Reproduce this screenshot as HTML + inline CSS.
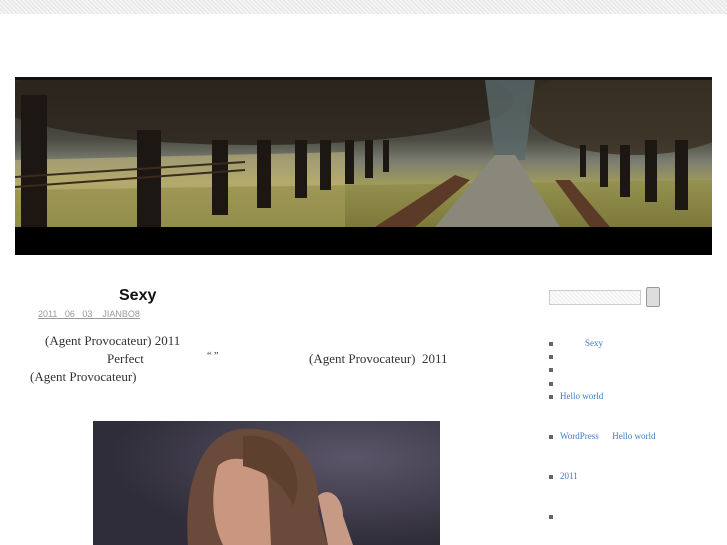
<!DOCTYPE html>
<html><head><meta charset="utf-8"><style>
body{margin:0;width:727px;height:545px;overflow:hidden;background:#fff;position:relative;font-family:"Liberation Serif","Noto Serif CJK SC",serif}
.a{position:absolute}
.top{left:0;top:0;width:727px;height:14px;background:repeating-linear-gradient(45deg,#e4e4e4 0 1px,#f4f4f4 1px 3px)}
.li{position:absolute;left:550px;font-size:9px;color:#3a7dc9}
.li:before{content:"";position:absolute;left:-1px;top:4px;width:4px;height:4px;background:#666}
.li span{margin-left:10px}
</style></head><body>
<div class="a top"></div>
<div class="a" style="left:15px;top:77px;width:697px;height:3px;background:#111"></div>
<svg class="a" style="left:15px;top:80px" width="697" height="147" viewBox="0 0 697 147">
<defs>
<linearGradient id="s" x1="0" y1="0" x2="0" y2="1"><stop offset="0" stop-color="#2e2a22"/><stop offset=".4" stop-color="#4a4a42"/><stop offset=".55" stop-color="#7a7d70"/><stop offset=".7" stop-color="#9e9a5c"/><stop offset="1" stop-color="#6e6c34"/></linearGradient>
</defs>
<rect width="697" height="147" fill="url(#s)"/>
<ellipse cx="240" cy="20" rx="260" ry="45" fill="#2b241c" opacity=".8"/>
<ellipse cx="620" cy="30" rx="110" ry="45" fill="#3a2f22" opacity=".8"/>
<polygon points="470,0 520,0 510,80 480,80" fill="#5a6a6a" opacity=".8"/>
<polygon points="0,80 330,72 330,147 0,147" fill="#c4b878" opacity=".55"/>
<polygon points="0,110 697,100 697,147 0,147" fill="#8a8540" opacity=".5"/>
<polygon points="480,75 500,75 545,147 420,147" fill="#8a877b"/>
<polygon points="360,147 440,95 455,100 400,147" fill="#5b3a28"/>
<polygon points="540,100 555,100 595,147 575,147" fill="#5b3a28"/>
<g fill="#1c1712">
<rect x="6" y="15" width="26" height="132"/><rect x="122" y="50" width="24" height="97"/><rect x="197" y="60" width="16" height="75"/>
<rect x="242" y="60" width="14" height="68"/><rect x="280" y="60" width="12" height="58"/><rect x="305" y="60" width="11" height="50"/>
<rect x="330" y="60" width="9" height="44"/><rect x="350" y="60" width="8" height="38"/><rect x="368" y="60" width="6" height="32"/>
<rect x="660" y="60" width="13" height="70"/><rect x="630" y="60" width="12" height="62"/><rect x="605" y="65" width="10" height="52"/>
<rect x="585" y="65" width="8" height="42"/><rect x="565" y="65" width="6" height="32"/>
</g>
<g stroke="#3a2a1c" stroke-width="2"><line x1="0" y1="97" x2="230" y2="82"/><line x1="0" y1="107" x2="230" y2="90"/></g>
</svg>
<div class="a" style="left:15px;top:227px;width:697px;height:28px;background:#000"></div>

<div class="a" style="left:119px;top:287px;font:bold 16px 'Liberation Sans',sans-serif;color:#111">Sexy</div>
<div class="a" style="left:38px;top:309px;font:9px 'Liberation Sans',sans-serif;color:#999;text-decoration:underline">2011&nbsp;&nbsp;&nbsp;06&nbsp;&nbsp;&nbsp;03&nbsp;&nbsp;&nbsp;&nbsp;JIANBO8</div>
<div class="a" style="left:45px;top:333px;font-size:13px;color:#333">(Agent Provocateur) 2011</div>
<div class="a" style="left:107px;top:351px;font-size:13px;color:#333">Perfect</div>
<div class="a" style="left:207px;top:351px;font-size:10px;color:#333">“ ”</div>
<div class="a" style="left:309px;top:351px;font-size:13px;color:#333">(Agent Provocateur)&nbsp; 2011</div>
<div class="a" style="left:30px;top:369px;font-size:13px;color:#333">(Agent Provocateur)</div>

<svg class="a" style="left:93px;top:421px" width="347" height="124" viewBox="0 0 347 124">
<defs><radialGradient id="b" cx=".75" cy=".3" r=".7"><stop offset="0" stop-color="#5a5568"/><stop offset="1" stop-color="#302d3a"/></radialGradient></defs>
<rect width="347" height="124" fill="url(#b)"/>
<path d="M95,124 C90,60 110,10 150,8 C200,5 230,40 225,90 L235,124 Z" fill="#6a4a3a"/>
<path d="M125,45 C140,30 170,40 175,60 L178,124 L130,124 C118,100 118,70 125,45Z" fill="#c99680"/>
<path d="M150,15 C190,10 215,50 200,85 C190,60 170,50 150,45 Z" fill="#5e402f"/>
<path d="M225,75 C235,65 250,75 250,95 L260,124 L235,124 Z" fill="#c79a86"/>
</svg>

<div class="a" style="left:549px;top:290px;width:92px;height:15px;border:1px solid #ccc;background:repeating-linear-gradient(45deg,#eee 0 1px,#fafafa 1px 3px);box-sizing:border-box"></div>
<div class="a" style="left:646px;top:287px;width:14px;height:20px;border:1px solid #999;border-radius:2px;background:#ddd;box-sizing:border-box"></div>

<div class="li" style="top:338px"><span style="margin-left:35px">Sexy</span></div>
<div class="li" style="top:351px"></div>
<div class="li" style="top:364px"></div>
<div class="li" style="top:378px"></div>
<div class="li" style="top:391px"><span>Hello world</span></div>
<div class="li" style="top:431px"><span>WordPress&nbsp;&nbsp;&nbsp;&nbsp;&nbsp;&nbsp;Hello world</span></div>
<div class="li" style="top:471px"><span>2011</span></div>
<div class="li" style="top:511px"></div>
</body></html>
